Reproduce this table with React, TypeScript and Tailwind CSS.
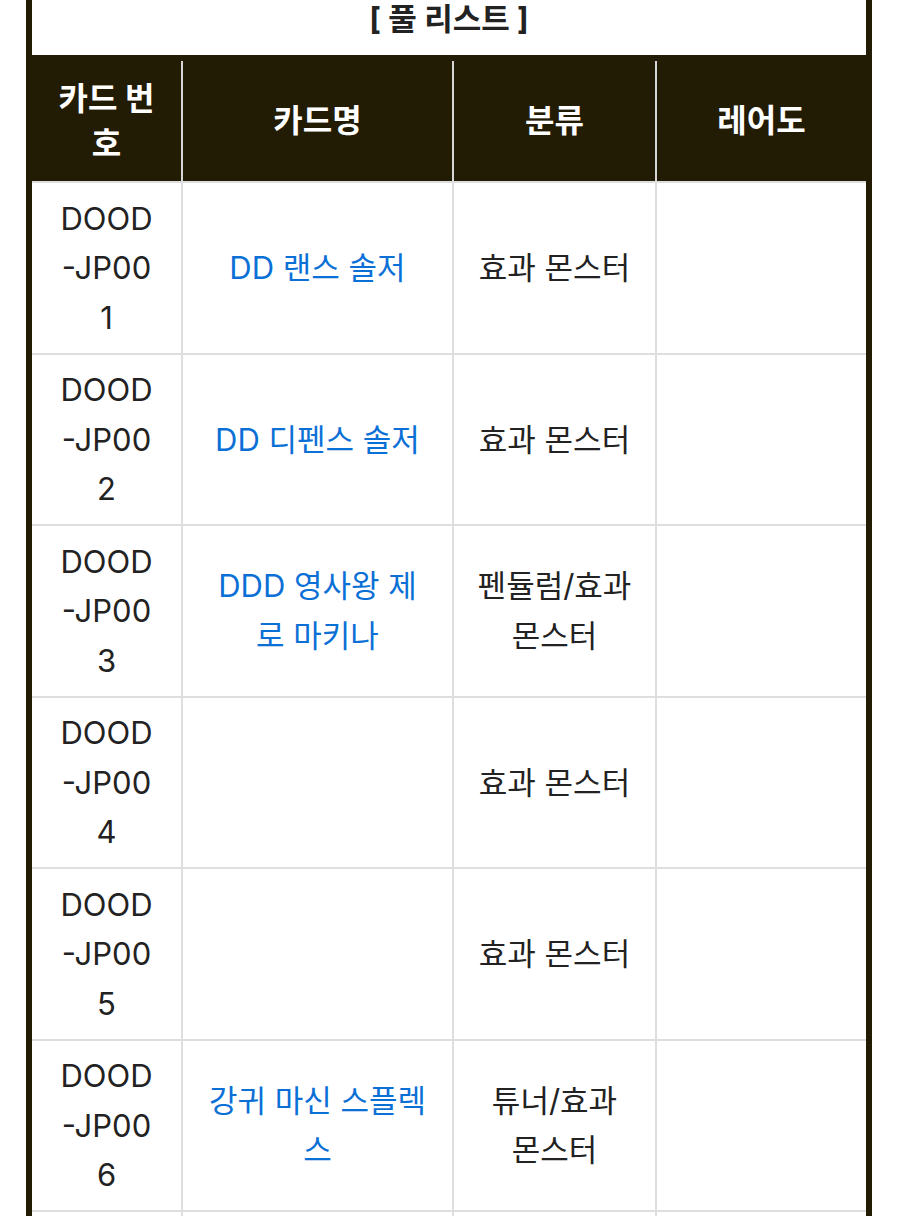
import React from "react";

type Row = { no: string[]; name: string[]; type: string[] };

const rows: Row[] = [
  { no: ["DOOD", "-JP00", "1"], name: ["DD 랜스 솔저"], type: ["효과 몬스터"] },
  { no: ["DOOD", "-JP00", "2"], name: ["DD 디펜스 솔저"], type: ["효과 몬스터"] },
  { no: ["DOOD", "-JP00", "3"], name: ["DDD 영사왕 제", "로 마키나"], type: ["펜듈럼/효과", "몬스터"] },
  { no: ["DOOD", "-JP00", "4"], name: [], type: ["효과 몬스터"] },
  { no: ["DOOD", "-JP00", "5"], name: [], type: ["효과 몬스터"] },
  { no: ["DOOD", "-JP00", "6"], name: ["강귀 마신 스플렉", "스"], type: ["튜너/효과", "몬스터"] },
];

const font = { fontFamily: 'Inter, "Noto Sans CJK KR", sans-serif' };

function Lines({ lines }: { lines: string[] }) {
  return (
    <>
      {lines.map((l, i) => (
        <span key={i} className="block whitespace-nowrap">
          {l}
        </span>
      ))}
    </>
  );
}

export default function App() {
  return (
    <div className="min-h-[1216px] bg-white overflow-hidden" style={font}>
      <div className="ml-[26px] w-[846px] border-x-[6px] border-[#231c05]">
        <div className="h-[55px] bg-white text-center text-[31px] font-bold leading-[38px] text-[#222]">
          [ 풀 리스트 ]
        </div>
        <div className="bg-[#231c05] pt-[6px]">
          <div className="grid grid-cols-[149px_269px_201px_209px] gap-x-[2px] bg-[#d6d6d6]">
            <div className="flex h-[120px] flex-col items-center justify-center bg-[#231c05] text-center text-[32px] font-bold leading-[45px] text-white">
              <span>카드 번</span>
              <span>호</span>
            </div>
            <div className="flex h-[120px] items-center justify-center bg-[#231c05] text-[32px] font-bold text-white">
              카드명
            </div>
            <div className="flex h-[120px] items-center justify-center bg-[#231c05] text-[32px] font-bold text-white">
              분류
            </div>
            <div className="flex h-[120px] items-center justify-center bg-[#231c05] text-[32px] font-bold text-white">
              레어도
            </div>
          </div>
        </div>
        <div className="grid grid-cols-[149px_269px_201px_209px] gap-[2px] bg-[#dedede] pt-[2px]">
          {rows.map((r, i) => (
            <React.Fragment key={i}>
              <div className="flex h-[169.5px] flex-col items-center justify-center bg-white text-center text-[31px] leading-[49.5px] text-[#222]">
                <Lines lines={r.no} />
              </div>
              <div className="flex h-[169.5px] flex-col items-center justify-center bg-white text-center text-[31px] leading-[49.5px] text-[#0b70d6]">
                <Lines lines={r.name} />
              </div>
              <div className="flex h-[169.5px] flex-col items-center justify-center bg-white text-center text-[31px] leading-[49.5px] text-[#222]">
                <Lines lines={r.type} />
              </div>
              <div className="h-[169.5px] bg-white" />
            </React.Fragment>
          ))}
          <div className="h-[60px] bg-white" />
          <div className="h-[60px] bg-white" />
          <div className="h-[60px] bg-white" />
          <div className="h-[60px] bg-white" />
        </div>
      </div>
    </div>
  );
}
